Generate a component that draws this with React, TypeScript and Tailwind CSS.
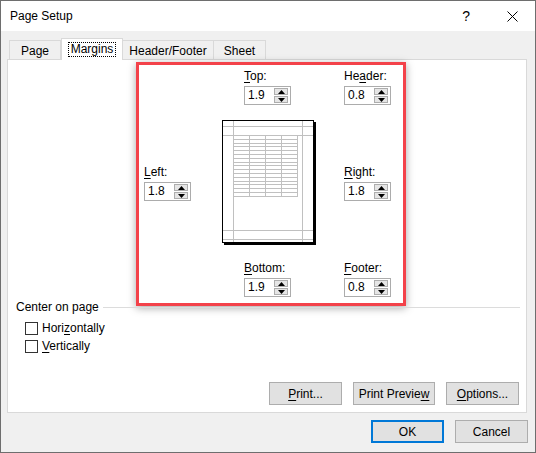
import React from 'react';

// ── Small pieces ───────────────────────────────────────────────────────────

function Key({ children }: { children: React.ReactNode }) {
  return <span className="underline underline-offset-[2px] decoration-[1px]">{children}</span>;
}

function ArrowUp() {
  return (
    <svg width="7" height="4" viewBox="0 0 7 4" aria-hidden="true">
      <path d="M0 4 L3.5 0 L7 4 Z" fill="#000" />
    </svg>
  );
}

function ArrowDown() {
  return (
    <svg width="7" height="4" viewBox="0 0 7 4" aria-hidden="true">
      <path d="M0 0 L3.5 4 L7 0 Z" fill="#000" />
    </svg>
  );
}

function Spinner({ label, value }: { label: React.ReactNode; value: string }) {
  return (
    <div className="flex flex-col">
      <div className="h-[15px] leading-[15px]">{label}</div>
      <div className="mt-[2px] flex h-[19px] w-[47px] border border-[#acacac] bg-white">
        <span className="flex-1 pl-[3px] leading-[17px]">{value}</span>
        <div className="my-px mr-[2px] flex w-[14px] flex-col gap-px">
          <div className="flex flex-1 items-center justify-center border border-[#adadad] bg-[#e5e5e5]">
            <ArrowUp />
          </div>
          <div className="flex flex-1 items-center justify-center border border-[#adadad] bg-[#e5e5e5]">
            <ArrowDown />
          </div>
        </div>
      </div>
    </div>
  );
}

function PagePreview() {
  const rows = Array.from({ length: 17 }, (_, i) => Math.round(15 + i * 3.8) + 0.5);
  const cols = [11.5, 27.5, 43.5, 59.5, 75.5];
  return (
    <svg width="96" height="126" viewBox="0 0 96 126" aria-hidden="true">
      <rect x="2" y="2" width="92" height="123" fill="#000" />
      <rect x="0.5" y="0.5" width="91" height="122" fill="#fff" stroke="#000" />
      <g stroke="#c0c0c0" strokeWidth="1" fill="none">
        <path d="M11.5 1V122M80.5 1V122" />
        <path d="M1 6.5H91M1 15.5H91M1 110.5H91M1 119.5H91" />
        {rows.map((y) => (
          <path key={y} d={`M11 ${y}H76`} />
        ))}
        {cols.map((x) => (
          <path key={x} d={`M${x} 15V${rows[rows.length - 1]}`} />
        ))}
      </g>
    </svg>
  );
}

function Checkbox({ children }: { children: React.ReactNode }) {
  return (
    <div className="flex h-[15px] items-center gap-[4px]">
      <span className="h-[13px] w-[13px] border border-[#333] bg-white" />
      <span className="leading-[15px]">{children}</span>
    </div>
  );
}

function Button({ children, primary }: { children: React.ReactNode; primary?: boolean }) {
  return (
    <div
      className={`flex h-[23px] items-center justify-center bg-[#e1e1e1] ${
        primary ? 'border-2 border-[#0078d7]' : 'border border-[#adadad]'
      }`}
    >
      {children}
    </div>
  );
}

// ── Dialog ─────────────────────────────────────────────────────────────────

export default function App() {
  return (
    <div className="flex h-[453px] w-[536px] flex-col border border-[#6e6e6e] bg-[#f0f0f0] font-['Liberation_Sans',sans-serif] text-[12px] text-black">
      {/* Title bar */}
      <div className="flex h-[30px] items-center bg-white pl-[9px]">
        <span className="flex-1 text-[12px]">Page Setup</span>
        <span className="mr-[37px] text-[14px] leading-none">?</span>
        <svg width="11" height="11" viewBox="0 0 11 11" className="mr-[17px]" aria-hidden="true">
          <path d="M0.5 0.5L10.5 10.5M10.5 0.5L0.5 10.5" stroke="#000" strokeWidth="1" />
        </svg>
      </div>

      {/* Tabs */}
      <div className="mt-[7px] flex h-[21px] items-end pl-[8px]">
        <div className="flex h-[19px] w-[52px] items-center justify-center border border-b-0 border-[#d9d9d9] pt-[2px]">
          Page
        </div>
        <div className="relative z-10 -mb-px flex h-[22px] w-[62px] items-start justify-center border border-b-0 border-[#d9d9d9] bg-white pt-[3px]">
          <span className="border border-dotted border-black px-[2px] leading-[13px]">Margins</span>
        </div>
        <div className="flex h-[19px] w-[91px] items-center justify-center border border-b-0 border-l-0 border-[#d9d9d9] pt-[2px]">
          Header/Footer
        </div>
        <div className="flex h-[19px] w-[52px] items-center justify-center border border-b-0 border-l-0 border-[#d9d9d9] pt-[2px]">
          Sheet
        </div>
      </div>

      {/* Panel */}
      <div className="ml-[6px] flex h-[354px] w-[520px] flex-col border border-[#d9d9d9] bg-white">
        <div className="ml-[128px] mt-[2px] w-[270px] border-[3px] border-[#f3424a] shadow-[0_2px_8px_rgba(0,0,0,0.35)]">
          <div className="grid grid-cols-[78px_122px_47px] pb-[6px] pl-[5px] pt-[4px]">
            {/* Row 1 */}
            <div />
            <div className="pl-[22px]">
              <Spinner label={<><Key>T</Key>op:</>} value="1.9" />
            </div>
            <Spinner label={<>He<Key>a</Key>der:</>} value="0.8" />

            {/* Row 2 */}
            <div className="mt-[15px] self-center">
              <Spinner label={<><Key>L</Key>eft:</>} value="1.8" />
            </div>
            <div className="mt-[15px]">
              <PagePreview />
            </div>
            <div className="mt-[15px] self-center">
              <Spinner label={<><Key>R</Key>ight:</>} value="1.8" />
            </div>

            {/* Row 3 */}
            <div />
            <div className="mt-[15px] pl-[22px]">
              <Spinner label={<><Key>B</Key>ottom:</>} value="1.9" />
            </div>
            <div className="mt-[15px]">
              <Spinner label={<><Key>F</Key>ooter:</>} value="0.8" />
            </div>
          </div>
        </div>

        {/* Center on page */}
        <div className="-mt-[6px] flex items-center pl-[8px] pr-[6px]">
          <span className="leading-[15px]">Center on page</span>
          <div className="ml-[4px] h-px flex-1 bg-[#dcdcdc]" />
        </div>
        <div className="mt-[6px] flex flex-col gap-[3px] pl-[17px]">
          <Checkbox>
            Hori<Key>z</Key>ontally
          </Checkbox>
          <Checkbox>
            <Key>V</Key>ertically
          </Checkbox>
        </div>

        <div className="mt-auto flex justify-end gap-[11px] pb-[7px] pr-[7px]">
          <div className="w-[73px]">
            <Button>
              <Key>P</Key>rint...
            </Button>
          </div>
          <div className="w-[82px]">
            <Button>
              Print Previe<Key>w</Key>
            </Button>
          </div>
          <div className="w-[73px]">
            <Button>
              <Key>O</Key>ptions...
            </Button>
          </div>
        </div>
      </div>

      {/* Footer buttons */}
      <div className="flex justify-end gap-[11px] pr-[7px] pt-[7px]">
        <div className="w-[73px]">
          <Button primary>OK</Button>
        </div>
        <div className="w-[73px]">
          <Button>Cancel</Button>
        </div>
      </div>
    </div>
  );
}
